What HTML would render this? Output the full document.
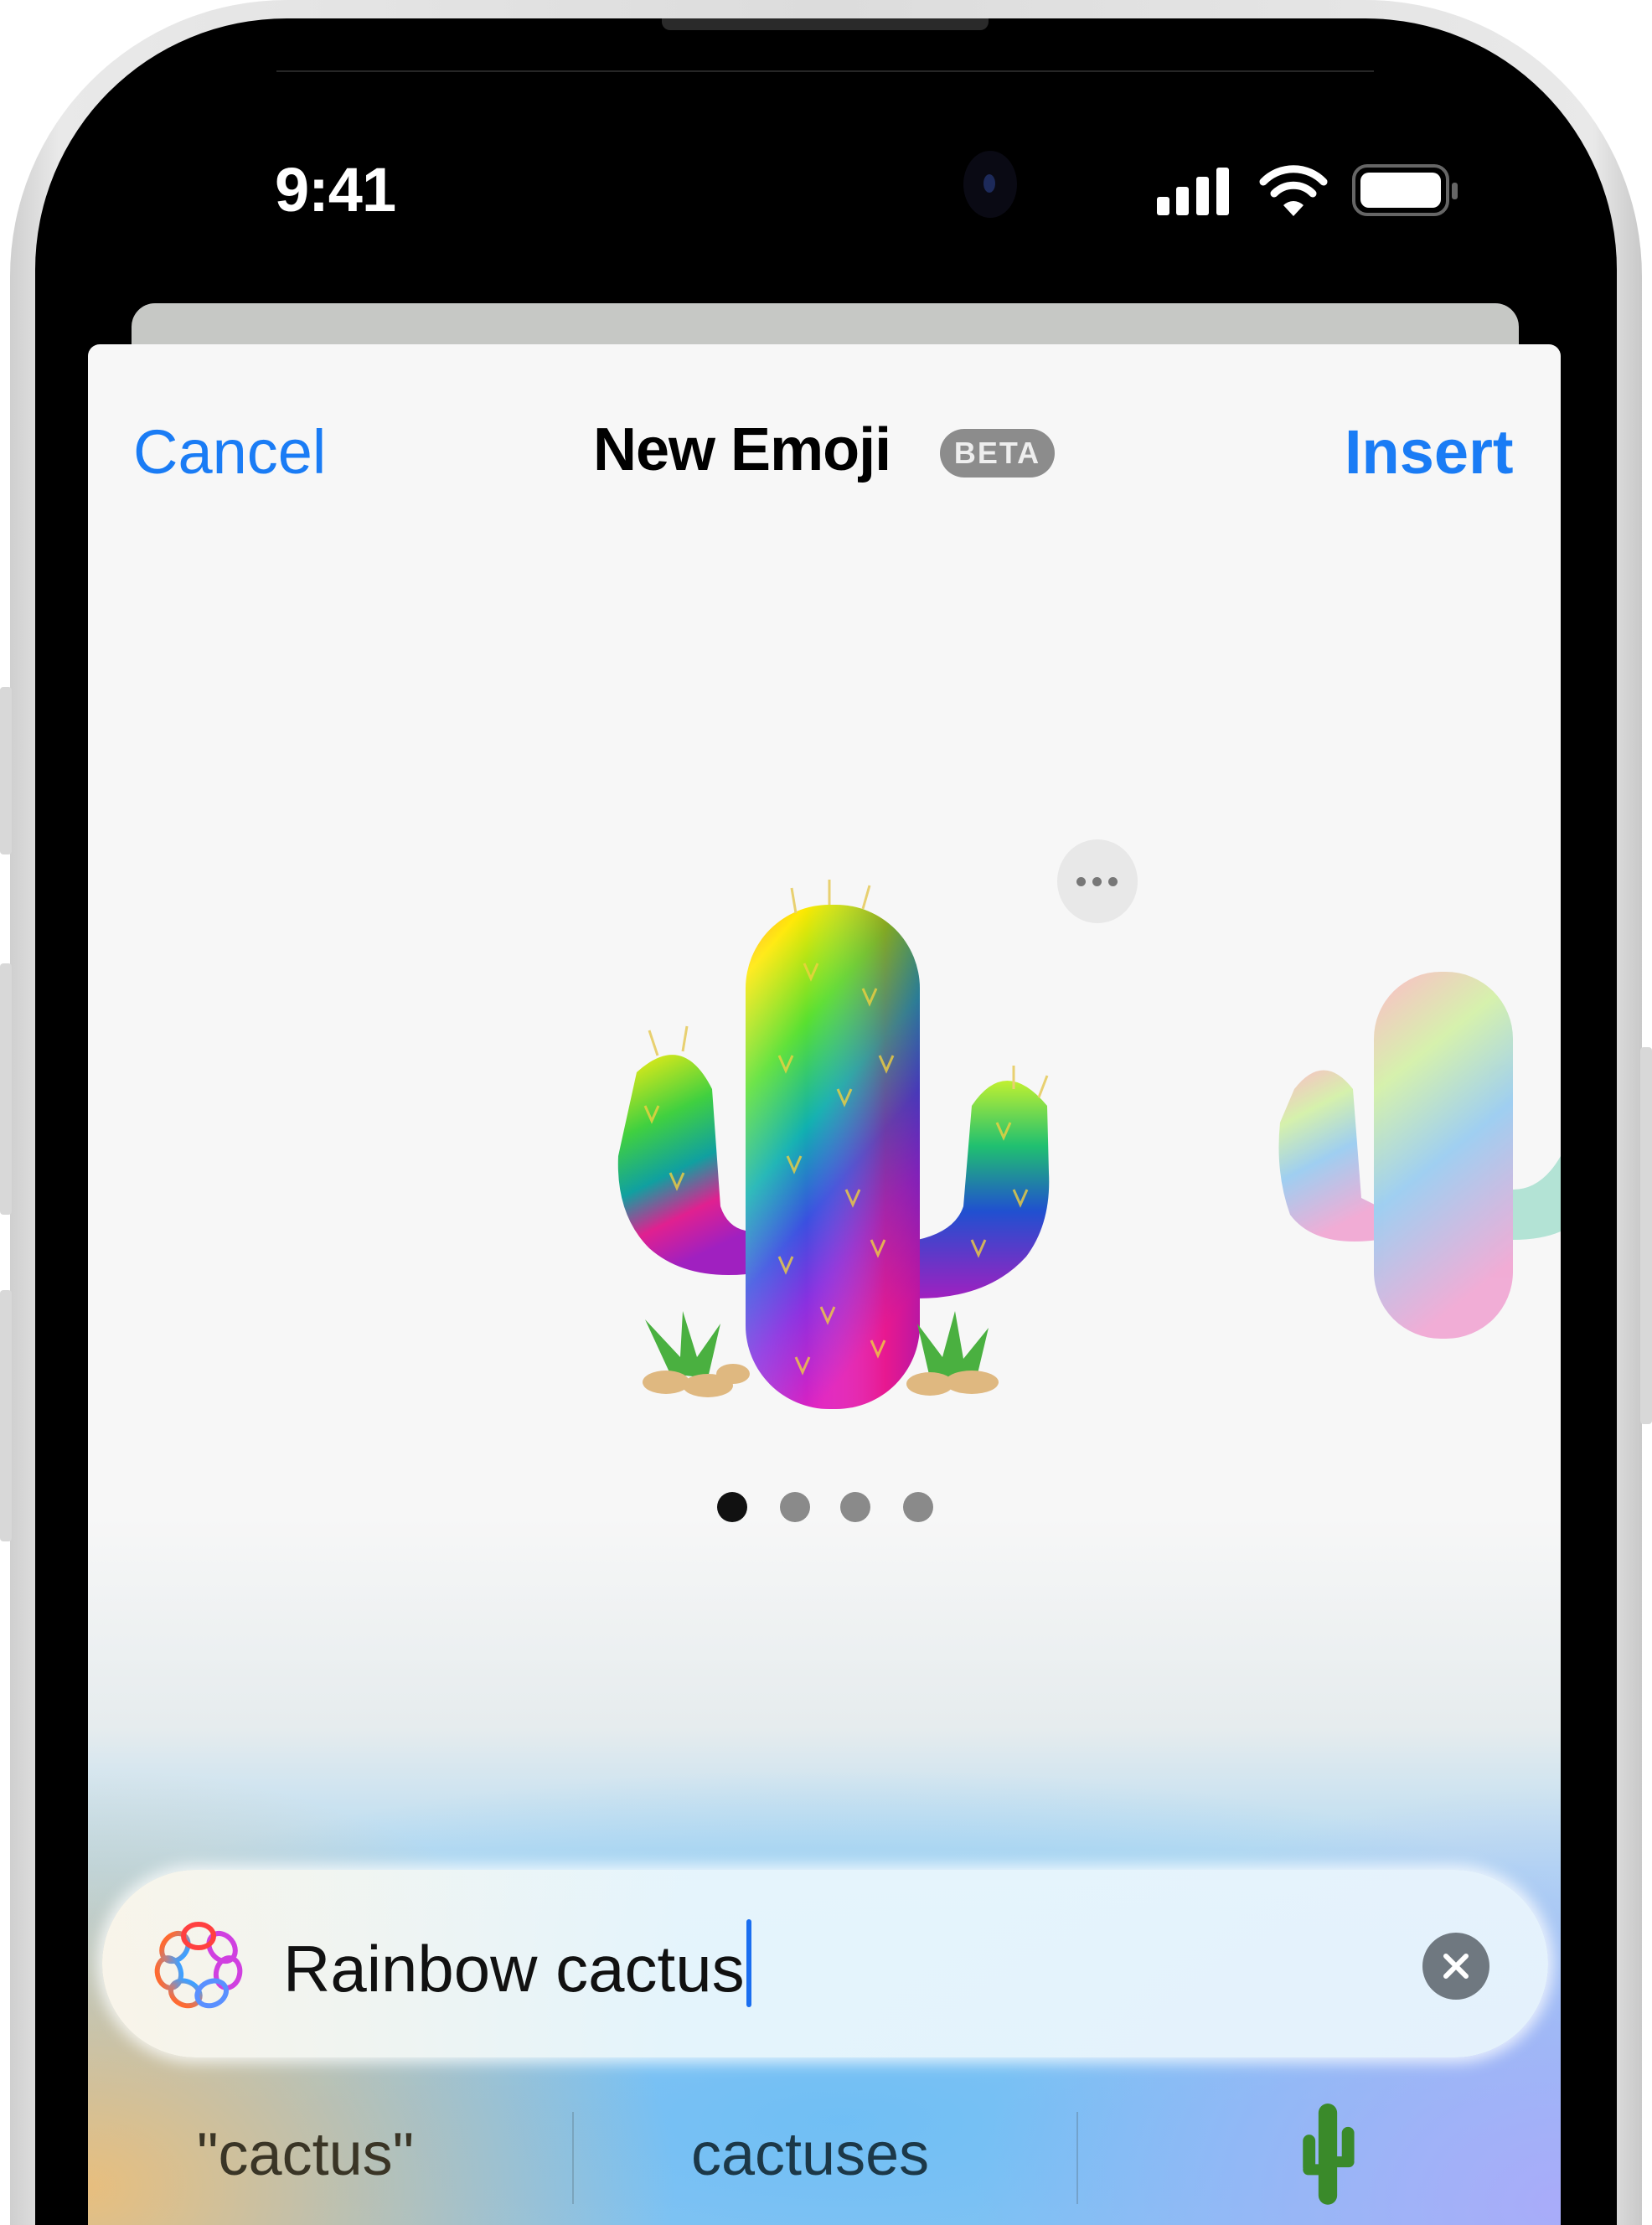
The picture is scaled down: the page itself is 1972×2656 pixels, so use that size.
<!DOCTYPE html>
<html><head><meta charset="utf-8"><style>
*{margin:0;padding:0;box-sizing:border-box}
html,body{width:1972px;height:2656px;overflow:hidden;background:#fff;font-family:"Liberation Sans",sans-serif}
#wrap{position:relative;width:1972px;height:2656px;overflow:hidden}
.abs{position:absolute}
#frame{left:12px;top:0;width:1948px;height:2656px;border-radius:330px 330px 0 0;background:linear-gradient(90deg,#cfcfcf,#e9e9e9 3%,#dcdcdc 50%,#e9e9e9 97%,#c9c9c9);}
#black{left:42px;top:22px;width:1888px;height:2634px;border-radius:300px 300px 0 0;background:#000}
#sheetback{left:157px;top:362px;width:1656px;height:80px;border-radius:28px 28px 0 0;background:#c6c8c5}
#sheet{left:105px;top:411px;width:1758px;height:2245px;border-radius:14px 14px 0 0;overflow:hidden;background:#f7f7f7}
.t{position:absolute;white-space:nowrap;line-height:1}
</style></head><body><div id="wrap">
<div id="frame" class="abs"></div>
<div class="abs" style="left:0;top:820px;width:14px;height:200px;background:#d8d8d8;border-radius:4px"></div>
<div class="abs" style="left:0;top:1150px;width:14px;height:300px;background:#d8d8d8;border-radius:4px"></div>
<div class="abs" style="left:0;top:1540px;width:14px;height:300px;background:#d8d8d8;border-radius:4px"></div>
<div class="abs" style="right:0;top:1250px;width:14px;height:450px;background:#d8d8d8;border-radius:4px"></div>
<div id="black" class="abs"></div>
<div class="abs" style="left:790px;top:22px;width:390px;height:14px;background:#2a2a2a;border-radius:0 0 10px 10px"></div>
<div class="abs" style="left:330px;top:84px;width:1310px;height:2px;background:#262626"></div>
<div class="t" style="left:328px;top:190px;font-size:74px;font-weight:bold;color:#fff;letter-spacing:-1px">9:41</div>
<div class="abs" style="left:1150px;top:180px;width:64px;height:80px;border-radius:50%;background:#0a0a14"></div>
<div class="abs" style="left:1174px;top:208px;width:14px;height:22px;border-radius:50%;background:#1d2a5a"></div>
<svg class="abs" style="left:1370px;top:190px" width="390" height="80" viewBox="1370 190 390 80">
<rect x="1381" y="235" width="15" height="22" rx="3" fill="#fff"/>
<rect x="1404" y="223" width="15" height="34" rx="3" fill="#fff"/>
<rect x="1428" y="211" width="15" height="46" rx="3" fill="#fff"/>
<rect x="1452" y="200" width="15" height="57" rx="3" fill="#fff"/>
<path d="M1508 217 A50 50 0 0 1 1580 217" stroke="#fff" stroke-width="9" fill="none" stroke-linecap="round"/>
<path d="M1521 231 A32 32 0 0 1 1567 231" stroke="#fff" stroke-width="9" fill="none" stroke-linecap="round"/>
<path d="M1532 245 L1544 258 L1556 245 A17 17 0 0 0 1532 245Z" fill="#fff"/>
<rect x="1616" y="198" width="112" height="58" rx="16" fill="none" stroke="#666" stroke-width="4"/>
<rect x="1624" y="206" width="96" height="42" rx="10" fill="#fff"/>
<rect x="1733" y="218" width="7" height="20" rx="3" fill="#666"/>
</svg>
<div id="sheetback" class="abs"></div>
<div id="sheet" class="abs">
 <div class="abs" style="left:0;top:1400px;width:1758px;height:845px;background:
 radial-gradient(ellipse 700px 500px at 0px 800px,rgba(236,190,120,.95),rgba(236,190,120,0) 100%),
 radial-gradient(ellipse 700px 500px at 1758px 820px,rgba(170,170,250,.95),rgba(170,170,250,0) 100%),
 radial-gradient(ellipse 1200px 420px at 900px 720px,rgba(110,190,245,.95),rgba(140,205,245,0) 100%),
 linear-gradient(180deg,rgba(247,247,247,1) 0px,rgba(230,236,238,1) 250px,rgba(180,218,242,1) 420px,rgba(150,200,240,1) 700px)"></div>
 <div class="t" style="left:54px;top:92px;font-size:74px;color:#1a7cf5">Cancel</div>
 <div class="t" style="left:603px;top:90px;font-size:72px;color:#000;font-weight:bold;letter-spacing:-1px">New Emoji</div>
 <div class="abs" style="left:1017px;top:101px;width:137px;height:58px;border-radius:29px;background:#8c8c8c;color:#eee;font-size:36px;font-weight:bold;text-align:center;line-height:58px;letter-spacing:2px">BETA</div>
 <div class="t" style="left:1500px;top:92px;font-size:74px;color:#1a7cf5;font-weight:bold">Insert</div>
 <div class="abs" style="left:1157px;top:591px;width:96px;height:100px;border-radius:50%;background:#e8e8e8"></div>
 <div class="abs" style="left:1180px;top:636px;width:11px;height:11px;border-radius:50%;background:#777;box-shadow:19px 0 0 #777,38px 0 0 #777"></div>
 <svg class="abs" style="left:0;top:0" width="1758" height="1500" viewBox="105 411 1758 1500">
  <defs>
   <linearGradient id="rb" x1="0" y1="0" x2="0.4" y2="1">
    <stop offset="0" stop-color="#ff9a10"/><stop offset=".12" stop-color="#ffe800"/><stop offset=".32" stop-color="#58e030"/><stop offset=".5" stop-color="#10b0b0"/><stop offset=".66" stop-color="#3a50e0"/><stop offset=".8" stop-color="#8a30e0"/><stop offset="1" stop-color="#e020c0"/>
   </linearGradient>
   <linearGradient id="rbL" x1="0" y1="0" x2="0.3" y2="1">
    <stop offset="0" stop-color="#ffee10"/><stop offset=".35" stop-color="#40d040"/><stop offset=".6" stop-color="#10a0a0"/><stop offset=".8" stop-color="#e02090"/><stop offset="1" stop-color="#a020c0"/>
   </linearGradient>
   <linearGradient id="rbR" x1="0" y1="0" x2="0" y2="1">
    <stop offset="0" stop-color="#c0f030"/><stop offset=".3" stop-color="#20c070"/><stop offset=".6" stop-color="#2050d0"/><stop offset="1" stop-color="#a020c0"/>
   </linearGradient>
   <linearGradient id="shade" x1="0" y1="0" x2="1" y2="0">
    <stop offset="0" stop-color="#fff" stop-opacity=".15"/><stop offset=".35" stop-color="#fff" stop-opacity="0"/><stop offset=".8" stop-color="#f00" stop-opacity=".25"/><stop offset="1" stop-color="#600060" stop-opacity=".3"/>
   </linearGradient>
   <linearGradient id="pastel" x1="0" y1="0" x2="0.3" y2="1">
    <stop offset="0" stop-color="#ffb0c0"/><stop offset=".3" stop-color="#d0f0a0"/><stop offset=".6" stop-color="#90c8f0"/><stop offset="1" stop-color="#f0a0d0"/>
   </linearGradient>
  </defs>
  <path d="M760 1280 Q815 1230 850 1300 L860 1440 Q870 1470 900 1470 L900 1520 Q820 1530 775 1490 Q735 1450 738 1380 Z" fill="url(#rbL)"/>
  <path d="M1250 1320 Q1200 1260 1160 1320 L1150 1440 Q1140 1470 1095 1480 L1095 1550 Q1180 1550 1225 1500 Q1255 1460 1252 1400 Z" fill="url(#rbR)"/>
  <rect x="890" y="1080" width="208" height="602" rx="100" fill="url(#rb)"/>
  <rect x="890" y="1080" width="208" height="602" rx="100" fill="url(#shade)"/>
  <g fill="#4ab040"><path d="M800 1640 L770 1575 L812 1620 L815 1565 L832 1620 L860 1580 L845 1645Z"/><path d="M1110 1645 L1095 1580 L1125 1620 L1140 1565 L1150 1622 L1180 1585 L1165 1648Z"/></g>
  <g fill="#dfb880"><ellipse cx="795" cy="1650" rx="28" ry="14"/><ellipse cx="845" cy="1654" rx="30" ry="14"/><ellipse cx="875" cy="1640" rx="20" ry="12"/><ellipse cx="1110" cy="1652" rx="28" ry="14"/><ellipse cx="1160" cy="1650" rx="32" ry="14"/></g>
  <g stroke="#f0d040" stroke-width="3" fill="none" opacity=".8">
   <path d="M960 1150 l8 18 l8 -18 M1030 1180 l8 18 l8 -18 M930 1260 l8 18 l8 -18 M1000 1300 l8 18 l8 -18 M1050 1260 l8 18 l8 -18 M940 1380 l8 18 l8 -18 M1010 1420 l8 18 l8 -18 M930 1500 l8 18 l8 -18 M1040 1480 l8 18 l8 -18 M980 1560 l8 18 l8 -18 M950 1620 l8 18 l8 -18 M1040 1600 l8 18 l8 -18 M770 1320 l8 18 l8 -18 M800 1400 l8 18 l8 -18 M1190 1340 l8 18 l8 -18 M1210 1420 l8 18 l8 -18 M1160 1480 l8 18 l8 -18"/>
  </g>
  <path d="M950 1090 l-5 -30 M990 1080 l0 -30 M1030 1085 l8 -28 M785 1260 l-10 -30 M815 1255 l5 -30 M1210 1300 l0 -28 M1240 1310 l10 -26" stroke="#e8d070" stroke-width="3"/>
  <g opacity=".85">
   <path d="M1545 1300 Q1580 1255 1615 1300 L1625 1430 L1645 1440 L1645 1480 Q1570 1490 1540 1450 Q1522 1400 1528 1340 Z" fill="url(#pastel)"/>
   <rect x="1640" y="1160" width="166" height="438" rx="80" fill="url(#pastel)"/>
   <path d="M1806 1420 Q1840 1420 1863 1380 L1863 1470 Q1840 1480 1806 1480Z" fill="#a8e0d0"/>
  </g>
 </svg>
 <div class="abs" style="left:751px;top:1370px;width:36px;height:36px;border-radius:50%;background:#111"></div>
 <div class="abs" style="left:826px;top:1370px;width:36px;height:36px;border-radius:50%;background:#8a8a8a"></div>
 <div class="abs" style="left:898px;top:1370px;width:36px;height:36px;border-radius:50%;background:#8a8a8a"></div>
 <div class="abs" style="left:973px;top:1370px;width:36px;height:36px;border-radius:50%;background:#8a8a8a"></div>
 <div class="abs" style="left:17px;top:1821px;width:1726px;height:224px;border-radius:112px;background:linear-gradient(90deg,rgba(250,246,235,.97),rgba(232,246,252,.96) 40%,rgba(232,244,252,.95) 100%);box-shadow:0 0 18px 6px rgba(255,255,255,.8)"></div>
 <svg class="abs" style="left:77px;top:1876px" width="110" height="120" viewBox="-55 -60 110 120">
  <defs><linearGradient id="ig2" x1="0" y1="0" x2="0" y2="1"><stop offset="0" stop-color="#ff6a30"/><stop offset=".5" stop-color="#c08080"/><stop offset="1" stop-color="#40a0ff"/></linearGradient></defs>
  <g fill="none" stroke-width="6">
   <g stroke="url(#ig2)"><ellipse cx="0" cy="-36" rx="18" ry="14" transform="rotate(-51.4)"/><ellipse cx="0" cy="-36" rx="18" ry="14" transform="rotate(-102.8)"/><ellipse cx="0" cy="-36" rx="18" ry="14" transform="rotate(-154.2)"/></g>
   <g stroke="#d040e0"><ellipse cx="0" cy="-36" rx="18" ry="14" transform="rotate(51.4)"/><ellipse cx="0" cy="-36" rx="18" ry="14" transform="rotate(102.8)"/></g>
   <ellipse cx="0" cy="-36" rx="18" ry="14" transform="rotate(154.2)" stroke="#5a90ff"/>
   <ellipse cx="0" cy="-36" rx="18" ry="14" transform="rotate(0)" stroke="#ff4040"/>
  </g>
 </svg>
 <div class="t" style="left:233px;top:1900px;font-size:78px;color:#111">Rainbow cactus</div>
 <div class="abs" style="left:786px;top:1880px;width:6px;height:105px;background:#1a6ef0;border-radius:3px"></div>
 <div class="abs" style="left:1593px;top:1896px;width:80px;height:80px;border-radius:50%;background:#6f7880"></div>
 <svg class="abs" style="left:1593px;top:1896px" width="80" height="80"><path d="M28 28 L52 52 M52 28 L28 52" stroke="#fff" stroke-width="6" stroke-linecap="round"/></svg>
 <div class="abs" style="left:578px;top:2110px;width:2px;height:110px;background:rgba(80,100,110,.3)"></div>
 <div class="abs" style="left:1180px;top:2110px;width:2px;height:110px;background:rgba(80,100,110,.3)"></div>
 <div class="t" style="left:130px;top:2125px;font-size:72px;color:#3a3526">"cactus"</div>
 <div class="t" style="left:720px;top:2125px;font-size:72px;color:#1c3848">cactuses</div>
 <svg class="abs" style="left:1440px;top:2100px" width="80" height="130" viewBox="0 0 80 140"><g fill="#3a8a2a"><rect x="28" y="0" width="24" height="130" rx="12"/><rect x="8" y="40" width="16" height="50" rx="8"/><rect x="8" y="78" width="30" height="14" rx="7"/><rect x="58" y="30" width="16" height="50" rx="8"/><rect x="44" y="68" width="30" height="14" rx="7"/></g></svg>
</div>
</div></body></html>
